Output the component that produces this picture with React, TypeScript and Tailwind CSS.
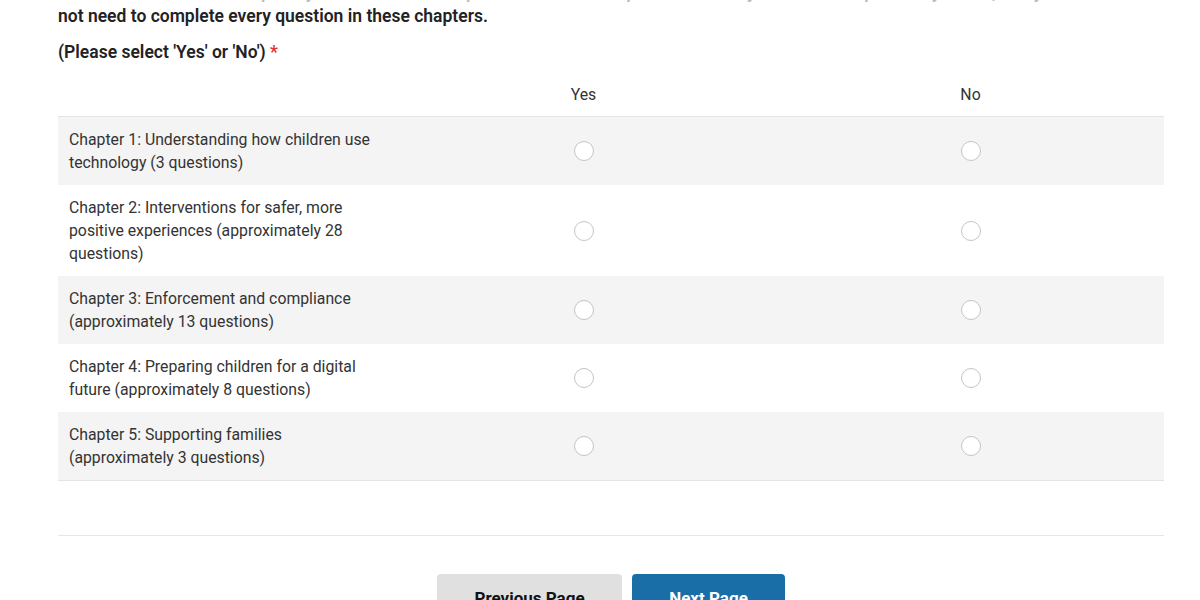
import React from "react";

const rows: string[][] = [
  ["Chapter 1: Understanding how children use", "technology (3 questions)"],
  ["Chapter 2: Interventions for safer, more", "positive experiences (approximately 28", "questions)"],
  ["Chapter 3: Enforcement and compliance", "(approximately 13 questions)"],
  ["Chapter 4: Preparing children for a digital", "future (approximately 8 questions)"],
  ["Chapter 5: Supporting families", "(approximately 3 questions)"],
];

function Radio() {
  return <span className="block w-[20px] h-[20px] rounded-full border-[1.5px] border-[#c4c4c4] bg-white" />;
}

export default function App() {
  return (
    <div className="bg-white w-[1200px] h-[600px] overflow-hidden text-[#222]" style={{ fontFamily: "Roboto, 'Liberation Sans', sans-serif" }}>
      <div className="ml-[58px] w-[1106px]">
        <div className="h-[4px] overflow-hidden">
          <p className="mt-[-20px] text-[17.5px] leading-[24px] font-semibold text-[#bbb] whitespace-nowrap">
            Please indicate which chapters you would like to respond to. You can respond to as many or as few chapters as you like, and you do
          </p>
        </div>
        <p className="text-[17.5px] leading-[24px] font-semibold text-[#222]">
          not need to complete every question in these chapters.
        </p>
        <p className="text-[17.5px] leading-[24px] font-semibold text-[#222] mt-[12px]">
          (Please select 'Yes' or 'No') <span className="text-[#e0313b]">*</span>
        </p>
        <div className="mt-[10px]">
          <div className="flex items-center h-[43px] border-b border-[#e4e4e4] text-[15.8px] text-[#333]">
            <div className="w-[332px]" />
            <div className="flex-1 text-center">Yes</div>
            <div className="flex-1 text-center">No</div>
          </div>
          {rows.map((lines, i) => (
            <div
              key={i}
              className={`flex items-center py-[11px] text-[15.8px] leading-[23px] text-[#333] ${i % 2 === 0 ? "bg-[#f4f4f4]" : "bg-white"} ${i === rows.length - 1 ? "border-b border-[#e4e4e4]" : ""}`}
            >
              <div className="w-[332px] pl-[11px]">
                {lines.map((l, j) => (
                  <div key={j} className="whitespace-nowrap">{l}</div>
                ))}
              </div>
              <div className="flex-1 flex justify-center">
                <Radio />
              </div>
              <div className="flex-1 flex justify-center">
                <Radio />
              </div>
            </div>
          ))}
        </div>
        <div className="mt-[54px] border-t border-[#e6e6e6]" />
        <div className="mt-[38px] flex justify-center gap-[10px]">
          <button className="w-[185px] h-[48px] rounded-[4px] bg-[#e0e0e0] text-[17px] font-bold text-[#111] pt-[2px]">
            Previous Page
          </button>
          <button className="w-[153px] h-[48px] rounded-[4px] bg-[#1a6ea8] text-[17px] font-bold text-white pt-[2px]">
            Next Page
          </button>
        </div>
      </div>
    </div>
  );
}
